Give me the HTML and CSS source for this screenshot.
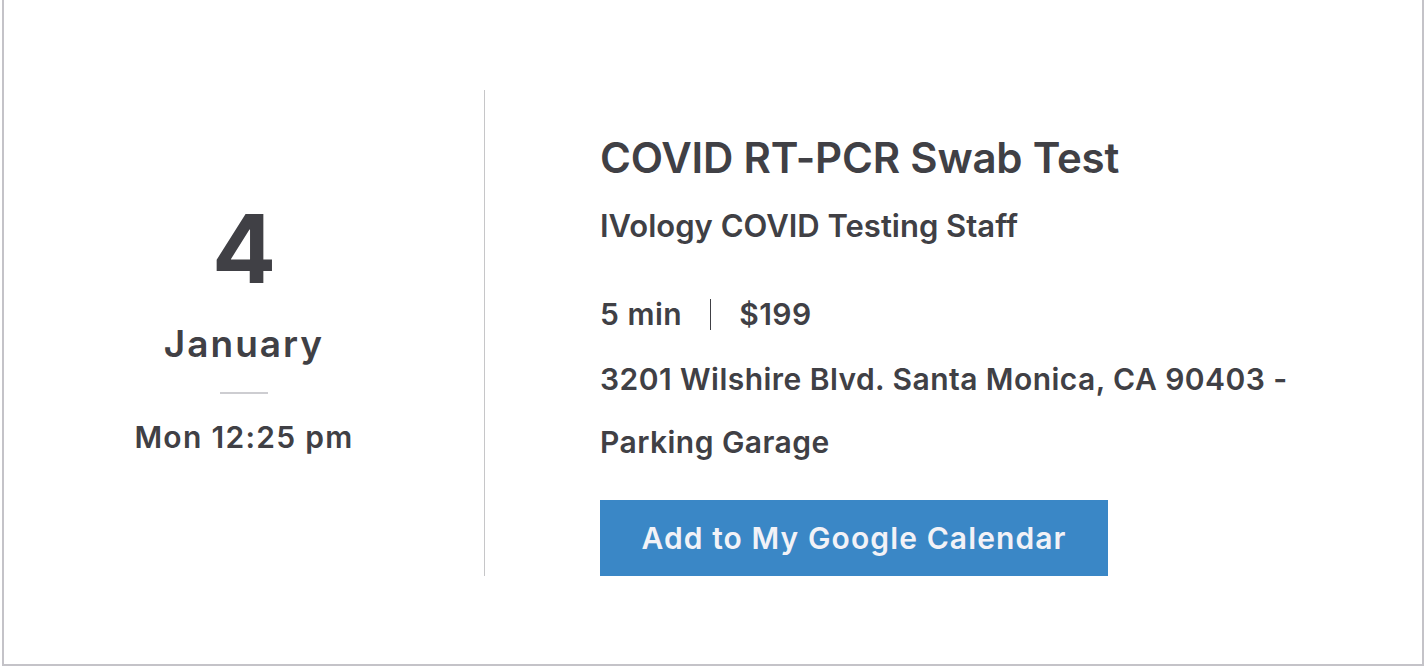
FILE: index.html
```html
<!DOCTYPE html>
<html lang="en">
<head>
<meta charset="utf-8">
<title>Appointment</title>
<link rel="stylesheet" href="styles.css">
</head>
<body>
<div class="card">
  <div class="date-col">
    <div class="day">4</div>
    <div class="month">January</div>
    <div class="rule"></div>
    <div class="time">Mon 12:25 pm</div>
  </div>
  <div class="details">
    <h1 class="title">COVID RT-PCR Swab Test</h1>
    <div class="staff">IVology COVID Testing Staff</div>
    <div class="meta"><span>5 min</span><span class="sep"></span><span>$199</span></div>
    <div class="address">3201 Wilshire Blvd. Santa Monica, CA 90403 - Parking Garage</div>
    <div class="btn">Add to My Google Calendar</div>
  </div>
</div>
</body>
</html>
```

FILE: styles.css
```css
* { box-sizing: border-box; }
html, body { margin: 0; padding: 0; background: #fff; }
body {
  font-family: Inter, Lato, "Noto Sans", sans-serif;
  color: #404045;
  font-weight: 600;
}
.card {
  margin: 0 2px;
  height: 666px;
  border: 2px solid #c4c3c8;
  border-top: 0;
  display: flex;
  align-items: flex-start;
  padding-top: 90px;
}
.date-col {
  width: 480px;
  display: flex;
  flex-direction: column;
  align-items: center;
  padding-top: 109px;
}
.day {
  font-size: 95px;
  line-height: 100px;
  font-weight: 700;
}
.month {
  font-size: 37px;
  line-height: 43px;
  letter-spacing: 2px;
  margin-top: 23px;
}
.rule {
  width: 48px;
  height: 2px;
  background: #cdcdd1;
  margin-top: 27px;
}
.time {
  font-size: 30px;
  line-height: 34px;
  letter-spacing: 1.3px;
  margin-top: 26px;
}
.details {
  border-left: 1px solid #c6c6c8;
  padding-left: 115px;
  padding-top: 43px;
  width: 820px;
}
.title {
  margin: 0;
  font-size: 42px;
  line-height: 50px;
  font-weight: 600;
  letter-spacing: -0.2px;
}
.staff {
  font-size: 31px;
  line-height: 38px;
  margin-top: 24px;
}
.meta {
  font-size: 30px;
  line-height: 63px;
  letter-spacing: 0.5px;
  margin-top: 38px;
  display: flex;
  align-items: center;
}
.sep {
  width: 1px;
  height: 31px;
  background: #404045;
  margin: 0 28px;
}
.address {
  font-size: 30px;
  line-height: 63px;
  letter-spacing: 0.45px;
  margin-top: 2px;
  width: 720px;
}
.btn {
  margin-top: 26px;
  width: 508px;
  text-align: center;
  background: #3a87c6;
  color: #f2f2f7;
  font-size: 30px;
  letter-spacing: 1.1px;
  line-height: 76px;
  height: 76px;
}
```
